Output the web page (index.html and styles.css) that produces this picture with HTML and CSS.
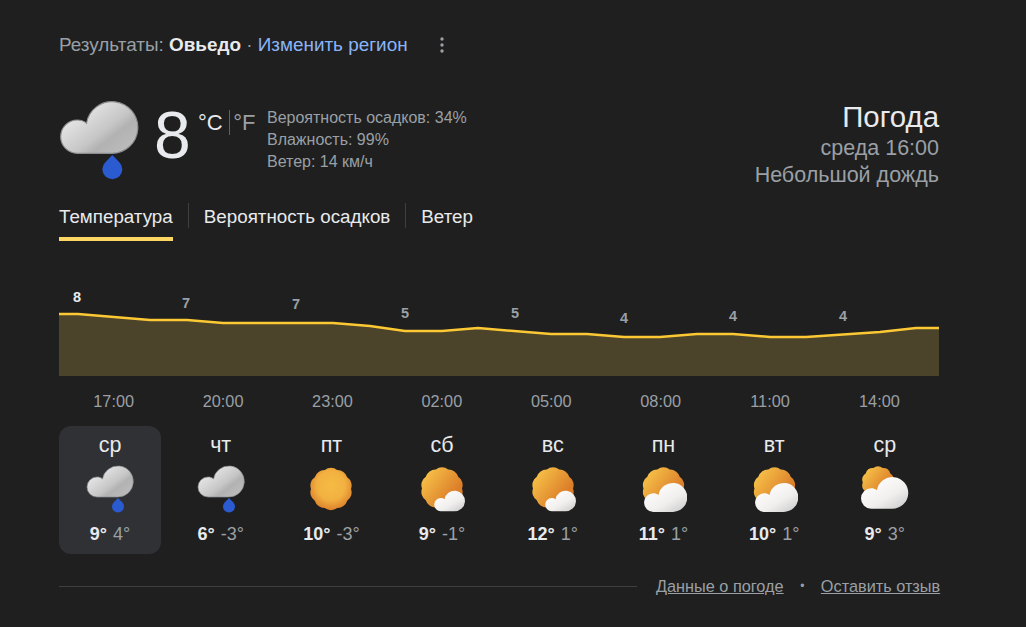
FILE: index.html
```html
<!DOCTYPE html>
<html lang="ru">
<head>
<meta charset="utf-8">
<title>Погода</title>
<link rel="stylesheet" href="styles.css">
</head>
<body>
<svg class="defs" width="0" height="0" aria-hidden="true">
  <defs>
    <linearGradient id="grayCloud" x1="0.1" y1="0.2" x2="0.9" y2="0.9">
      <stop offset="0" stop-color="#ececec"/>
      <stop offset="0.55" stop-color="#c6c6c6"/>
      <stop offset="0.7" stop-color="#b2b2b2"/>
      <stop offset="1" stop-color="#bcbcbc"/>
    </linearGradient>
    <linearGradient id="whiteCloud" x1="0.15" y1="0.1" x2="0.9" y2="0.95">
      <stop offset="0" stop-color="#ffffff"/>
      <stop offset="0.6" stop-color="#f1efee"/>
      <stop offset="1" stop-color="#cfcfcf"/>
    </linearGradient>
    <radialGradient id="sunRound" cx="0.5" cy="0.42" r="0.62">
      <stop offset="0" stop-color="#f5bb44"/>
      <stop offset="0.55" stop-color="#f2b141"/>
      <stop offset="1" stop-color="#d97a28"/>
    </radialGradient>
    <linearGradient id="sunSide" x1="0.15" y1="0.1" x2="0.8" y2="0.6">
      <stop offset="0" stop-color="#f6bf47"/>
      <stop offset="1" stop-color="#dc7f2a"/>
    </linearGradient>
    <path id="cloudShape" d="M11 32A10 10 0 0 1 11 12C13 12 15 12.5 16.5 14A15.5 15.5 0 1 1 31.5 32Z"/>
    <path id="sunShape" d="M20 0A10 10 0 0 1 16.2 11.8A10 10 0 0 1 6.2 19A10 10 0 0 1-6.2 19A10 10 0 0 1-16.2 11.8A10 10 0 0 1-20 0A10 10 0 0 1-16.2-11.8A10 10 0 0 1-6.2-19A10 10 0 0 1 6.2-19A10 10 0 0 1 16.2-11.8A10 10 0 0 1 20 0Z"/>
    <symbol id="rain" viewBox="0 0 48 48">
      <use href="#cloudShape" fill="url(#grayCloud)" stroke="#8b8d90" stroke-width="0.7"/>
      <path d="M32 33L36.2 37.3A6 6 0 1 1 27.8 37.3Z" fill="#2a5bd0"/>
    </symbol>
    <symbol id="sun" viewBox="0 0 48 48">
      <use href="#sunShape" transform="translate(24 24)" fill="url(#sunRound)"/>
    </symbol>
    <symbol id="sunCloudSmall" viewBox="0 0 48 48">
      <use href="#sunShape" transform="translate(24 23.5)" fill="url(#sunSide)"/>
      <use href="#cloudShape" transform="translate(15.5 25) scale(0.665)" fill="url(#whiteCloud)"/>
    </symbol>
    <symbol id="sunCloudLarge" viewBox="0 0 48 48">
      <use href="#sunShape" transform="translate(24.5 23.5)" fill="url(#sunSide)"/>
      <use href="#cloudShape" transform="translate(4.1 17) scale(0.935)" fill="url(#whiteCloud)"/>
    </symbol>
    <symbol id="cloudSun" viewBox="0 0 48 48">
      <use href="#sunShape" transform="translate(17 17.5) scale(0.76)" fill="url(#sunSide)"/>
      <use href="#cloudShape" transform="translate(-1 11) scale(1.02)" fill="url(#whiteCloud)"/>
    </symbol>
  </defs>
</svg>

<main class="card">
  <div class="region">
    <span>Результаты: <b class="place">Овьедо</b> · <a class="change" href="#">Изменить регион</a></span>
    <svg class="dots" viewBox="0 0 4 16" width="4" height="16"><circle cx="2" cy="2" r="1.7"/><circle cx="2" cy="8" r="1.7"/><circle cx="2" cy="14" r="1.7"/></svg>
  </div>

  <section class="current">
    <svg class="big-icon"><use href="#rain"/></svg>
    <div class="temp">8</div>
    <div class="units"><span class="unit-on">°C</span><span class="unit-off">°F</span></div>
    <ul class="stats">
      <li>Вероятность осадков: 34%</li>
      <li>Влажность: 99%</li>
      <li>Ветер: 14 км/ч</li>
    </ul>
    <div class="summary">
      <div class="summary-title">Погода</div>
      <div class="summary-line">среда 16:00</div>
      <div class="summary-line">Небольшой дождь</div>
    </div>
  </section>

  <nav class="tabs">
    <a class="tab tab-on">Температура</a>
    <a class="tab">Вероятность осадков</a>
    <a class="tab">Ветер</a>
  </nav>

  <svg class="chart" viewBox="0 0 880 100" width="880" height="100">
    <path class="area" d="M0 38H19L91 44H128L164 47H274L311 50L346 55H383L419 52L492 58H528L565 61H601L638 58H674L711 61H747L821 56L857 52H880V100H0Z"/>
    <path class="line" d="M0 38H19L91 44H128L164 47H274L311 50L346 55H383L419 52L492 58H528L565 61H601L638 58H674L711 61H747L821 56L857 52H880"/>
    <text class="num num-on" x="18" y="26">8</text>
    <text class="num" x="127" y="32">7</text>
    <text class="num" x="237" y="33">7</text>
    <text class="num" x="346" y="42">5</text>
    <text class="num" x="456" y="42">5</text>
    <text class="num" x="565" y="47">4</text>
    <text class="num" x="674" y="45">4</text>
    <text class="num" x="784" y="45">4</text>
  </svg>

  <div class="times">
    <span>17:00</span><span>20:00</span><span>23:00</span><span>02:00</span><span>05:00</span><span>08:00</span><span>11:00</span><span>14:00</span>
  </div>

  <div class="days">
    <div class="day day-on">
      <div class="day-name">ср</div>
      <svg class="day-icon"><use href="#rain"/></svg>
      <div class="day-temp"><b>9°</b><span>4°</span></div>
    </div>
    <div class="day">
      <div class="day-name">чт</div>
      <svg class="day-icon"><use href="#rain"/></svg>
      <div class="day-temp"><b>6°</b><span>-3°</span></div>
    </div>
    <div class="day">
      <div class="day-name">пт</div>
      <svg class="day-icon"><use href="#sun"/></svg>
      <div class="day-temp"><b>10°</b><span>-3°</span></div>
    </div>
    <div class="day">
      <div class="day-name">сб</div>
      <svg class="day-icon"><use href="#sunCloudSmall"/></svg>
      <div class="day-temp"><b>9°</b><span>-1°</span></div>
    </div>
    <div class="day">
      <div class="day-name">вс</div>
      <svg class="day-icon"><use href="#sunCloudSmall"/></svg>
      <div class="day-temp"><b>12°</b><span>1°</span></div>
    </div>
    <div class="day">
      <div class="day-name">пн</div>
      <svg class="day-icon"><use href="#sunCloudLarge"/></svg>
      <div class="day-temp"><b>11°</b><span>1°</span></div>
    </div>
    <div class="day">
      <div class="day-name">вт</div>
      <svg class="day-icon"><use href="#sunCloudLarge"/></svg>
      <div class="day-temp"><b>10°</b><span>1°</span></div>
    </div>
    <div class="day">
      <div class="day-name">ср</div>
      <svg class="day-icon"><use href="#cloudSun"/></svg>
      <div class="day-temp"><b>9°</b><span>3°</span></div>
    </div>
  </div>

  <footer class="foot">
    <div class="rule"></div>
    <a class="foot-link" href="#">Данные о погоде</a>
    <span class="foot-dot">•</span>
    <a class="foot-link" href="#">Оставить отзыв</a>
  </footer>
</main>
</body>
</html>
```

FILE: styles.css
```css
* { box-sizing: border-box; }

html, body { margin: 0; padding: 0; height: 100%; }

body {
  background: #1f1f1f;
  color: #e8eaed;
  font-family: "Liberation Sans", Arial, sans-serif;
  overflow: hidden;
}

.defs { display: block; height: 0; }

.card {
  width: 880px;
  margin-left: 59px;
  padding-top: 35px;
}

.region {
  display: flex;
  align-items: center;
  height: 20px;
  font-size: 18.9px;
  line-height: 20px;
  color: #9aa0a6;
}

.place { color: #e8eaed; }

.change { color: #8ab4f8; text-decoration: none; }

.dots { margin-left: 32px; fill: #9aa0a6; }

.current {
  display: flex;
  align-items: flex-start;
  height: 90px;
  margin-top: 45px;
}

.big-icon { width: 80px; height: 80px; flex: none; }

.temp {
  margin-left: 15px;
  font-size: 66px;
  line-height: 70px;
  color: #e8eaed;
}

.units {
  display: flex;
  align-items: center;
  margin-left: 7.3px;
  margin-top: 10px;
  height: 25px;
  font-size: 22px;
}

.unit-on { padding-right: 6px; border-right: 1px solid #5f6368; line-height: 25px; }

.unit-off { padding-left: 3.5px; color: #9aa0a6; line-height: 25px; }

.stats {
  list-style: none;
  margin: 0 0 0 11.5px;
  padding: 7px 0 0;
  font-size: 16px;
  line-height: 22px;
  color: #9aa0a6;
}

.summary { margin-left: auto; text-align: right; margin-top: -1px; color: #9aa0a6; }

.summary-title { font-size: 29.4px; line-height: 36px; color: #e8eaed; }

.summary-line { font-size: 21.5px; line-height: 27px; }

.tabs {
  display: flex;
  align-items: flex-start;
  height: 43px;
  margin-top: 13px;
  font-size: 18.8px;
  line-height: 27px;
}

.tab { position: relative; height: 25px; padding: 0 15px; color: #e8eaed; border-right: 1px solid #3c4043; }

.tab:first-child { padding: 0; margin-right: 15px; border-right: 0; }

.tab:first-child::after {
  content: "";
  position: absolute;
  left: 0;
  right: 0;
  top: 34px;
  height: 4px;
  background: #fdd663;
}

.tab:last-child { border-right: 0; }

.tab:nth-child(2) { border-left: 1px solid #3c4043; }

.chart { display: block; margin-top: 30px; }

.area { fill: #4b432a; }

.line { fill: none; stroke: #fcc934; stroke-width: 2.5; }

.num { font-size: 14.5px; font-weight: 700; fill: #9aa0a6; text-anchor: middle; font-family: "Liberation Sans", Arial, sans-serif; }

.num-on { fill: #e8eaed; }

.times {
  display: grid;
  grid-template-columns: repeat(8, 109.4px);
  height: 20px;
  margin-top: 15px;
  font-size: 16.3px;
  line-height: 20px;
  color: #9aa0a6;
  text-align: center;
}

.days {
  display: grid;
  grid-template-columns: repeat(8, 102px);
  column-gap: 8.7px;
  margin-top: 15px;
}

.day {
  height: 128px;
  border-radius: 12px;
  text-align: center;
}

.day-on { background: #303134; }

.day-name { padding-top: 6px; font-size: 21.5px; line-height: 26px; color: #e8eaed; }

.day-icon { display: block; width: 48px; height: 48px; margin: 7px auto 0; }

.day-temp { margin-top: 11px; font-size: 18px; line-height: 20px; color: #9aa0a6; }

.day-temp b { margin-right: 6px; color: #e8eaed; font-weight: 700; }

.foot {
  display: flex;
  align-items: center;
  height: 24px;
  margin-top: 20px;
  font-size: 16.3px;
  color: #9aa0a6;
  white-space: nowrap;
}

.rule { flex: none; width: 578px; height: 1px; background: #3c4043; margin-right: 19px; }

.foot-link { color: #9aa0a6; text-decoration: underline; }

.foot-dot { margin: 0 16.5px; font-size: 12px; }
```
